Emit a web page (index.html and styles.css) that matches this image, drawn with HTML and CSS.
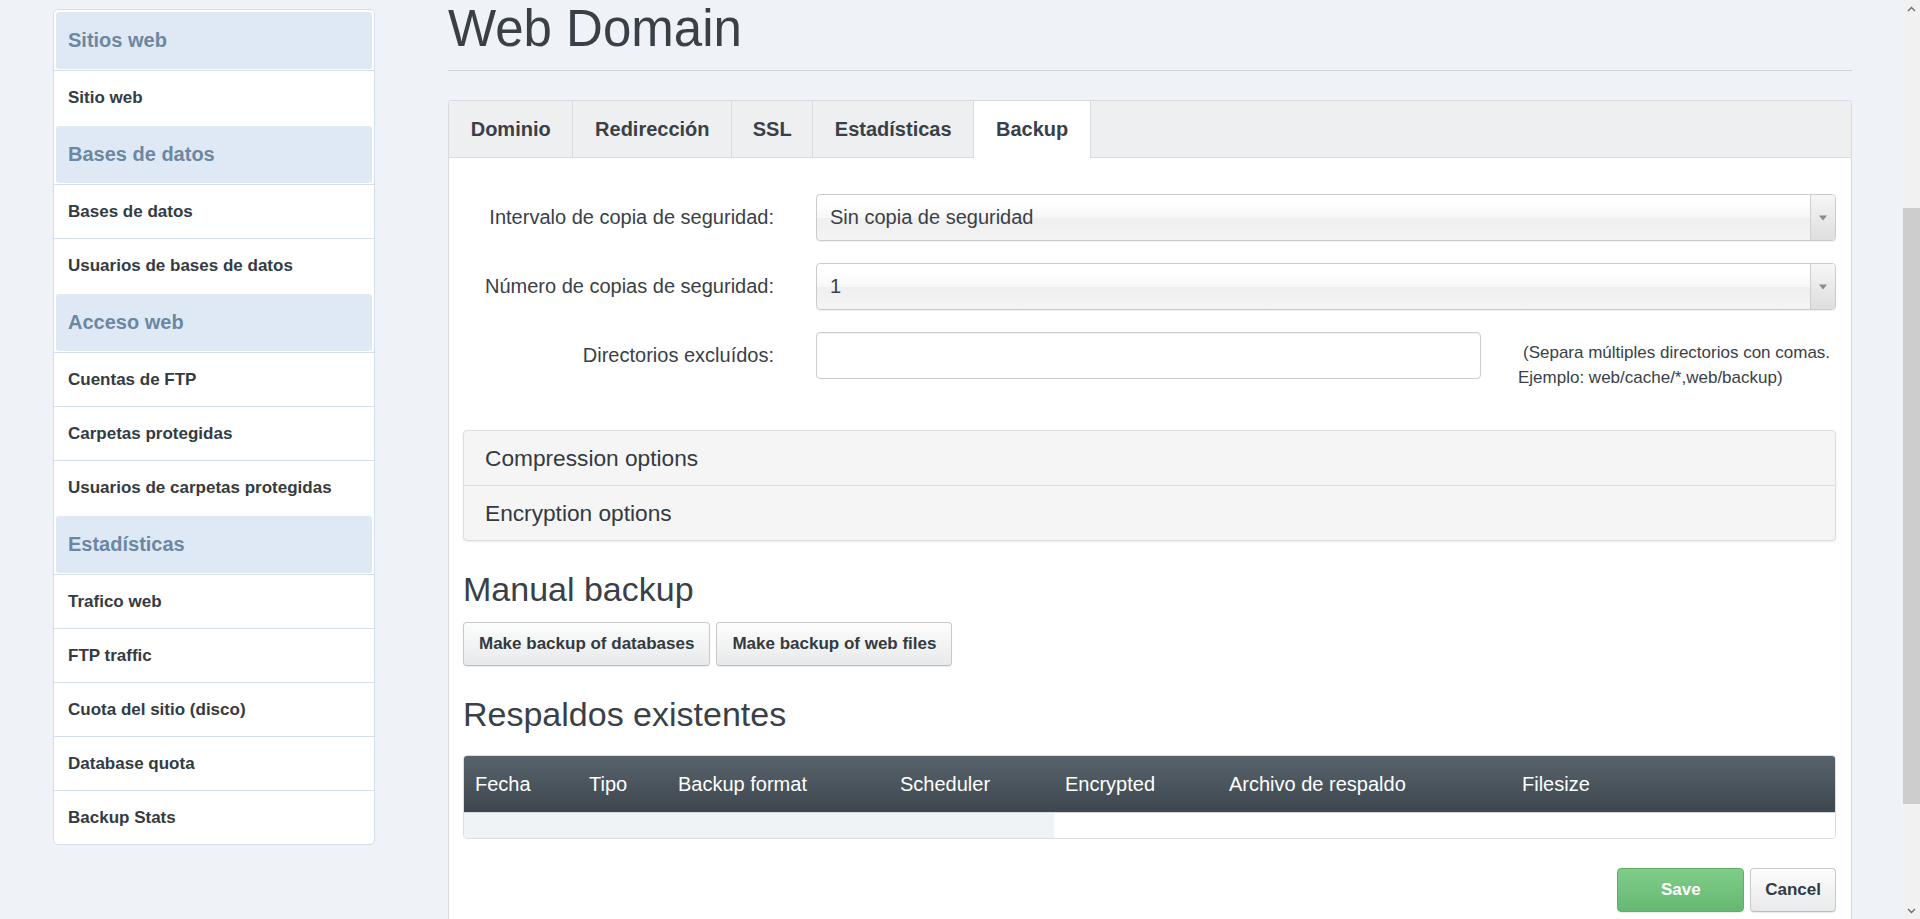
FILE: index.html
```html
<!DOCTYPE html>
<html lang="es">
<head>
<meta charset="utf-8">
<title>Web Domain</title>
<link rel="stylesheet" href="styles.css">
</head>
<body>
<div class="page">
  <aside class="sidebar">
    <div class="nav-head nav-head-first">Sitios web</div>
    <a class="nav-item" href="#">Sitio web</a>
    <div class="nav-head">Bases de datos</div>
    <a class="nav-item" href="#">Bases de datos</a>
    <a class="nav-item" href="#">Usuarios de bases de datos</a>
    <div class="nav-head">Acceso web</div>
    <a class="nav-item" href="#">Cuentas de FTP</a>
    <a class="nav-item" href="#">Carpetas protegidas</a>
    <a class="nav-item" href="#">Usuarios de carpetas protegidas</a>
    <div class="nav-head">Estadísticas</div>
    <a class="nav-item" href="#">Trafico web</a>
    <a class="nav-item" href="#">FTP traffic</a>
    <a class="nav-item" href="#">Cuota del sitio (disco)</a>
    <a class="nav-item" href="#">Database quota</a>
    <a class="nav-item" href="#">Backup Stats</a>
  </aside>

  <main class="main">
    <h1 class="page-title">Web Domain</h1>

    <div class="tabpanel">
      <ul class="tabs">
        <li class="tab">Dominio</li>
        <li class="tab">Redirección</li>
        <li class="tab tab-short">SSL</li>
        <li class="tab">Estadísticas</li>
        <li class="tab active">Backup</li>
      </ul>

      <div class="tab-body">
        <div class="form-row">
          <div class="label">Intervalo de copia de seguridad:</div>
          <div class="select">
            <span class="select-text">Sin copia de seguridad</span>
            <span class="select-arrow"><svg width="8" height="6" viewBox="0 0 8 6"><path d="M0 0.5H8L4 5.5Z" fill="#8c8c8c"/></svg></span>
          </div>
        </div>
        <div class="form-row">
          <div class="label">Número de copias de seguridad:</div>
          <div class="select">
            <span class="select-text">1</span>
            <span class="select-arrow"><svg width="8" height="6" viewBox="0 0 8 6"><path d="M0 0.5H8L4 5.5Z" fill="#8c8c8c"/></svg></span>
          </div>
        </div>
        <div class="form-row form-row-last">
          <div class="label">Directorios excluídos:</div>
          <div class="input-wrap">
            <div class="text-input"></div>
            <p class="help">(Separa múltiples directorios con comas.<br>Ejemplo: web/cache/*,web/backup)</p>
          </div>
        </div>

        <div class="accordion">
          <div class="acc-item">Compression options</div>
          <div class="acc-item acc-item-next">Encryption options</div>
        </div>

        <h3 class="section-title">Manual backup</h3>
        <div class="btn-row">
          <button class="btn" type="button">Make backup of databases</button>
          <button class="btn" type="button">Make backup of web files</button>
        </div>

        <h3 class="section-title section-title-table">Respaldos existentes</h3>
        <div class="table-wrap">
          <table class="backups">
            <colgroup>
              <col class="c1"><col class="c2"><col class="c3"><col class="c4"><col class="c5"><col class="c6"><col class="c7">
            </colgroup>
            <thead>
              <tr>
                <th>Fecha</th>
                <th>Tipo</th>
                <th>Backup format</th>
                <th>Scheduler</th>
                <th>Encrypted</th>
                <th>Archivo de respaldo</th>
                <th>Filesize</th>
              </tr>
            </thead>
            <tbody>
              <tr>
                <td class="empty" colspan="4"></td>
                <td></td><td></td><td></td>
              </tr>
            </tbody>
          </table>
        </div>

        <div class="actions">
          <button class="btn btn-save" type="button">Save</button>
          <button class="btn btn-cancel" type="button">Cancel</button>
        </div>
      </div>
    </div>
  </main>
</div>

<div class="scrollbar">
  <div class="sb-up"><svg width="9" height="6" viewBox="0 0 9 6"><path d="M1 5L4.5 1.5L8 5" fill="none" stroke="#6e6e6e" stroke-width="1.4"/></svg></div>
  <div class="sb-thumb"></div>
  <div class="sb-down"><svg width="9" height="6" viewBox="0 0 9 6"><path d="M1 1L4.5 4.5L8 1" fill="none" stroke="#6e6e6e" stroke-width="1.4"/></svg></div>
</div>
</body>
</html>
```

FILE: styles.css
```css
html, body {
  margin: 0;
  padding: 0;
}

body {
  background: #eff3f7;
  font-family: "Liberation Sans", Arial, sans-serif;
  color: #3a4047;
  overflow: hidden;
  height: 919px;
}

.page {
  display: flex;
  align-items: flex-start;
  gap: 73px;
  padding: 0 68px 0 53px;
}

/* ---------- Sidebar ---------- */
.sidebar {
  flex: none;
  width: 322px;
  box-sizing: border-box;
  margin-top: 9px;
  background: #fff;
  border: 1px solid #d3deea;
  border-radius: 5px;
}

.nav-head {
  margin: 2px 2px 1px;
  height: 57px;
  line-height: 57px;
  padding-left: 12px;
  background: #dfe9f5;
  color: #6c87a1;
  font-size: 20px;
  font-weight: bold;
  border-radius: 3px;
}

.nav-item {
  display: block;
  height: 53px;
  line-height: 53px;
  padding-left: 14px;
  border-top: 1px solid #d3deea;
  font-size: 17px;
  font-weight: bold;
  color: #343b42;
  text-decoration: none;
}

/* ---------- Main ---------- */
.main {
  flex: 1;
  min-width: 0;
}

.page-title {
  margin: 0;
  padding: 1px 0 13px;
  font-size: 51px;
  line-height: 56px;
  font-weight: normal;
  color: #3a4047;
  border-bottom: 1px solid #d0d4d8;
}

.tabpanel {
  margin-top: 29px;
  background: #fff;
  border: 1px solid #d7dadd;
  border-bottom: none;
  border-radius: 4px 4px 0 0;
}

.tabs {
  display: flex;
  list-style: none;
  margin: 0;
  padding: 0;
  height: 56px;
  background: #eeeff1;
  border-bottom: 1px solid #d9dcdf;
  border-radius: 4px 4px 0 0;
}

.tab {
  padding: 0 21.7px;
  line-height: 56px;
  font-size: 20px;
  font-weight: bold;
  color: #3a4047;
  border-right: 1px solid #d9dcdf;
}

.tab-short {
  padding: 0 20.5px;
}

.tab.active {
  background: #fff;
  height: 57px;
}

.tab-body {
  padding: 36px 15px 60px 14px;
}

/* ---------- Form ---------- */
.form-row {
  display: grid;
  grid-template-columns: 311px 1fr;
  column-gap: 42px;
  align-items: start;
  margin-bottom: 22px;
}

.form-row-last {
  margin-bottom: 0;
}

.label {
  text-align: right;
  font-size: 20px;
  line-height: 47px;
  color: #3a4047;
}

.select {
  display: flex;
  height: 47px;
  box-sizing: border-box;
  border: 1px solid #cbcbcb;
  border-radius: 4px;
  background: linear-gradient(#fff 20%, #f7f7f7 50%, #efefef 52%, #f4f4f4 100%);
  box-shadow: 0 1px 1px rgba(0, 0, 0, 0.06);
}

.select-text {
  flex: 1;
  padding-left: 13px;
  line-height: 45px;
  font-size: 20px;
  color: #3a4047;
}

.select-arrow {
  flex: none;
  width: 24px;
  display: flex;
  align-items: center;
  justify-content: center;
  border-left: 1px solid #cfcfcf;
  border-radius: 0 3px 3px 0;
  background: linear-gradient(#f6f6f6, #dedede);
}

.input-wrap {
  display: flex;
  align-items: flex-start;
}

.text-input {
  flex: none;
  width: 665px;
  height: 47px;
  box-sizing: border-box;
  border: 1px solid #cccccc;
  border-radius: 4px;
  background: #fff;
  box-shadow: inset 0 1px 1px rgba(0, 0, 0, 0.06);
}

.help {
  margin: 8px 0 0 37px;
  font-size: 17px;
  line-height: 25px;
  text-indent: 5px;
  color: #3a4047;
  white-space: nowrap;
}

/* ---------- Accordion ---------- */
.accordion {
  margin-top: 40px;
  border: 1px solid #dddddd;
  border-radius: 4px;
  background: #f5f5f5;
  box-shadow: 0 1px 2px rgba(0, 0, 0, 0.08);
}

.acc-item {
  height: 54px;
  line-height: 54px;
  padding-left: 21px;
  font-size: 22.7px;
  color: #333a41;
}

.acc-item-next {
  border-top: 1px solid #dddddd;
}

/* ---------- Sections ---------- */
.section-title {
  margin: 30px 0 14px;
  font-size: 34px;
  line-height: 37px;
  font-weight: normal;
  color: #3a4047;
}

.section-title-table {
  margin-bottom: 22px;
}

.btn-row {
  display: flex;
  gap: 6px;
}

.btn {
  height: 44px;
  box-sizing: border-box;
  padding: 0 15px;
  border: 1px solid #c9c9c9;
  border-bottom-color: #bdbdbd;
  border-radius: 4px;
  background: linear-gradient(#fdfdfd, #e8e9ea);
  box-shadow: 0 1px 1px rgba(0, 0, 0, 0.08);
  font-family: "Liberation Sans", Arial, sans-serif;
  font-size: 17px;
  font-weight: bold;
  color: #333a41;
}

/* ---------- Table ---------- */
.table-wrap {
  border: 1px solid #dddddd;
  border-radius: 4px;
  overflow: hidden;
}

.backups {
  width: 100%;
  table-layout: fixed;
  border-collapse: separate;
  border-spacing: 0;
}

.c1 { width: 114px; }
.c2 { width: 89px; }
.c3 { width: 222px; }
.c4 { width: 165px; }
.c5 { width: 164px; }
.c6 { width: 293px; }
.c7 { width: auto; }

.backups th {
  height: 56px;
  padding: 0 0 0 11px;
  text-align: left;
  font-size: 20px;
  font-weight: normal;
  color: #fff;
  background: linear-gradient(#57636c, #3e474f);
}

.backups td {
  height: 25px;
  padding: 0;
  border-top: 1px solid #d4d7da;
  background: #fff;
}

.backups td.empty {
  background: #f0f3f6;
}

/* ---------- Actions ---------- */
.actions {
  display: flex;
  justify-content: flex-end;
  gap: 6px;
  margin-top: 29px;
}

.btn-save {
  width: 127px;
  color: #fff;
  border-color: #5fae69;
  background: linear-gradient(#80cd8a, #66b771);
}

.btn-cancel {
  padding: 0 14px;
}

/* ---------- Scrollbar (overlay) ---------- */
.scrollbar {
  position: fixed;
  top: 0;
  right: 0;
  width: 17px;
  height: 100%;
  background: #f1f1f1;
}

.sb-up,
.sb-down {
  position: absolute;
  left: 0;
  width: 17px;
  height: 17px;
  display: flex;
  align-items: center;
  justify-content: center;
}

.sb-up { top: 0; }
.sb-down { bottom: 0; }

.sb-thumb {
  position: absolute;
  left: 0;
  top: 208px;
  width: 17px;
  height: 596px;
  background: #cdcdcd;
}
```
